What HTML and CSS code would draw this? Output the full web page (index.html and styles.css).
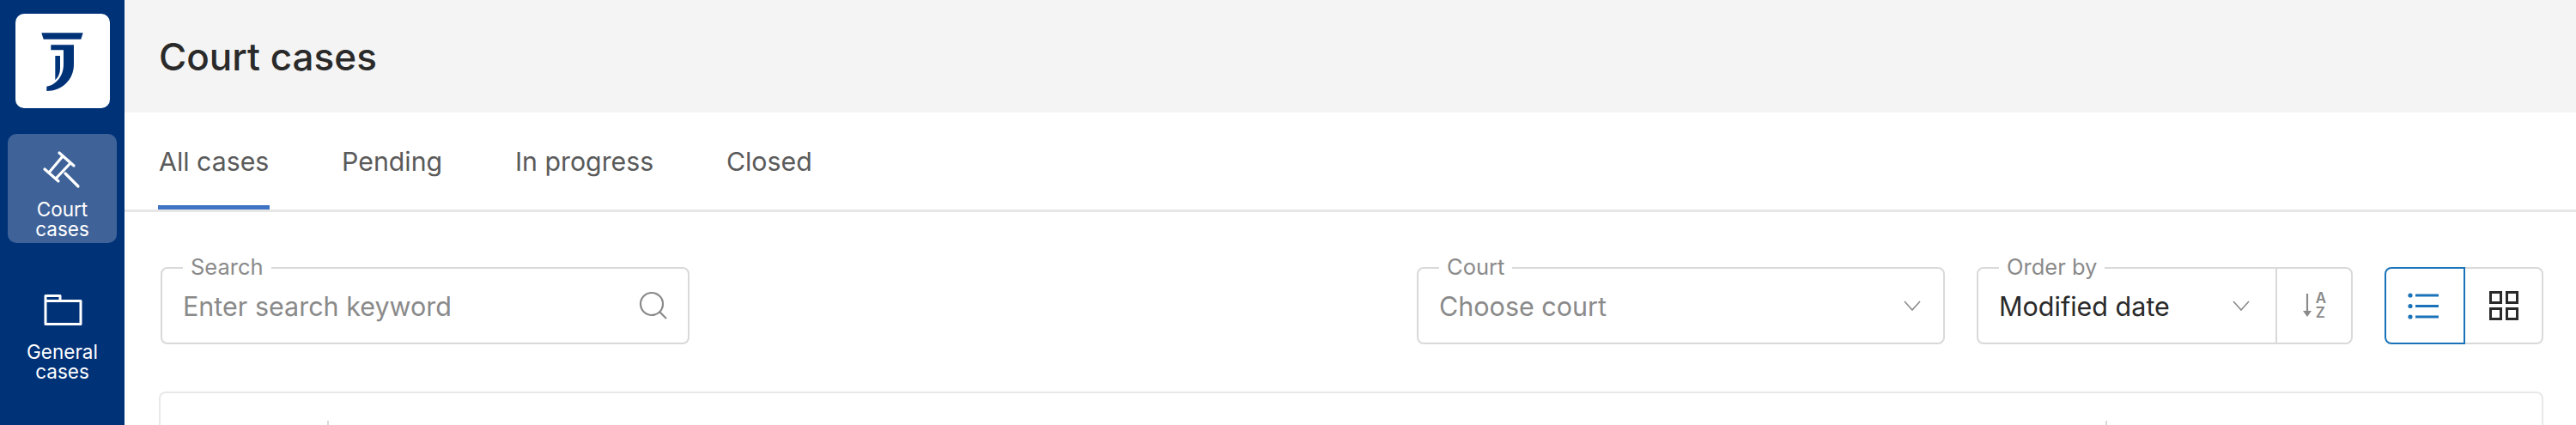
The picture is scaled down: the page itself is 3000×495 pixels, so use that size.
FILE: index.html
```html
<!DOCTYPE html>
<html lang="en">
<head>
<meta charset="utf-8">
<title>Court cases</title>
<link rel="stylesheet" href="styles.css">
</head>
<body>
<div class="app">
  <nav class="sidebar">
    <a class="logo">
      <svg viewBox="0 0 110 110" width="110" height="110"><path fill="#003278" d="M30.3 22.3H78.7L76.3 29.7H32.7Z"/><path fill="#003278" d="M41.3 36.3H68V59C68 77 54 90 36.3 90V84.7C47 83 56 73 56 59V42.3H41.3Z"/><path fill="#003278" d="M46.3 49H52V64C52 69 50 74 46.3 77.3Z"/></svg>
    </a>
    <a class="nav-item active">
      <svg viewBox="0 0 48 48" width="48" height="48" fill="none" stroke="#fff" stroke-width="3.2" stroke-linecap="round"><path d="M20 4L37 19M3 23L19 37M24 8L8 27M33 16L16 34M27 28L42 43"/></svg>
      <span class="nav-label">Court<br>cases</span>
    </a>
    <a class="nav-item">
      <svg viewBox="0 0 48 48" width="48" height="48" fill="none" stroke="#fff" stroke-width="3" stroke-linejoin="round"><path d="M4 4.500H21V10.500H45V37.500H4ZM4 10.500H21"/></svg>
      <span class="nav-label">General<br>cases</span>
    </a>
  </nav>
  <main class="main">
    <header class="page-head"><h1 class="page-title">Court cases</h1></header>
    <div class="tabs">
      <a class="tab selected">All cases</a>
      <a class="tab">Pending</a>
      <a class="tab">In progress</a>
      <a class="tab">Closed</a>
    </div>
    <div class="toolbar">
      <div class="field field-search">
        <span class="legend">Search</span>
        <span class="value placeholder">Enter search keyword</span>
        <svg class="icon" viewBox="0 0 34 34" width="34" height="34" fill="none" stroke="#8a8a8a" stroke-width="2.2"><circle cx="15" cy="15" r="13"/><path d="M24.500 24.500L32 32"/></svg>
      </div>
      <div class="spacer"></div>
      <div class="field field-court">
        <span class="legend">Court</span>
        <span class="value placeholder">Choose court</span>
        <svg class="chevron" viewBox="0 0 20 12" width="20" height="12" fill="none" stroke="#8a8a8a" stroke-width="1.6"><path d="M1 1L10 11L19 1"/></svg>
      </div>
      <div class="field field-order">
        <span class="legend">Order by</span>
        <div class="order-select">
          <span class="value">Modified date</span>
          <svg class="chevron" viewBox="0 0 20 12" width="20" height="12" fill="none" stroke="#8a8a8a" stroke-width="1.6"><path d="M1 1L10 11L19 1"/></svg>
        </div>
        <div class="order-sort">
          <svg viewBox="0 0 12 30" width="12" height="30"><path d="M6 1V24" stroke="#8a8a8a" stroke-width="2.2"/><path d="M1 21H11L6 28Z" fill="#8a8a8a"/></svg>
          <span class="sort-letters"><span>A</span><span>Z</span></span>
        </div>
      </div>
      <div class="view-toggle">
        <button class="view-btn on">
          <svg viewBox="0 0 36 31" width="36" height="31" fill="#1a73b8"><circle cx="3" cy="3" r="2.600"/><circle cx="3" cy="15.500" r="2.600"/><circle cx="3" cy="28" r="2.600"/><rect x="9" y="1.500" width="27" height="3"/><rect x="9" y="14" width="27" height="3"/><rect x="9" y="26.500" width="27" height="3"/></svg>
        </button>
        <button class="view-btn">
          <svg viewBox="0 0 34 34" width="34" height="34" fill="none" stroke="#2a2a2a" stroke-width="3"><rect x="1.500" y="1.500" width="12" height="12"/><rect x="20.500" y="1.500" width="12" height="12"/><rect x="1.500" y="20.500" width="12" height="12"/><rect x="20.500" y="20.500" width="12" height="12"/></svg>
        </button>
      </div>
    </div>
    <div class="card">
      <div class="card-head">
        <span class="col col-a"></span>
        <span class="col col-b"></span>
        <span class="col col-c"></span>
      </div>
    </div>
  </main>
</div>
</body>
</html>
```

FILE: styles.css
```css
* { box-sizing: border-box; }
html, body { margin: 0; height: 100%; overflow: hidden; background: #fff; }
body { font-family: Inter, "Liberation Sans", sans-serif; color: #222; }

.app { display: flex; height: 495px; overflow: hidden; }

.sidebar { width: 145px; flex: none; background: #003278; display: flex; flex-direction: column; align-items: center; padding-top: 16px; }
.logo { width: 110px; height: 110px; flex: none; background: #fff; border-radius: 10px; display: block; margin-bottom: 30px; }
.logo svg { display: block; }
.nav-item { width: 127px; height: 127px; flex: none; border-radius: 10px; display: flex; flex-direction: column; align-items: center; padding-top: 18px; color: #fff; margin-bottom: 39px; }
.nav-item.active { background: #3f6399; }
.nav-label { font-size: 22.500px; line-height: 23px; text-align: center; margin-top: 10px; }

.main { flex: 1; min-width: 0; display: flex; flex-direction: column; }
.page-head { height: 131px; flex: none; background: #f4f4f4; display: flex; align-items: center; padding-left: 40px; }
.page-title { margin: 0; font-size: 44px; font-weight: 500; color: #2a2a2a; }

.tabs { height: 116px; flex: none; border-bottom: 3px solid #e6e6e6; display: flex; gap: 82.700px; padding-left: 39px; }
.tab { height: 113px; padding: 0 1px; display: flex; align-items: center; font-size: 30.300px; color: #5a5a5a; }
.tab.selected { border-bottom: 5px solid #3f73c4; padding-top: 5px; }

.toolbar { display: flex; flex: none; gap: 37px; padding: 64px 38px 0 42px; }
.spacer { flex: 1; }
.field { position: relative; height: 90px; border: 2px solid #d9d9d9; border-radius: 8px; display: flex; align-items: center; }
.field-search { width: 616px; padding: 0 23px 0 24px; justify-content: space-between; }
.field-court { width: 615px; padding: 0 26px 0 24px; justify-content: space-between; }
.field-order { width: 438px; }
.legend { position: absolute; top: -17px; left: 24px; padding: 0 9px; background: #fff; font-size: 25.500px; line-height: 30px; color: #8a8a8a; }
.value { font-size: 30.500px; color: #2a2a2a; }
.placeholder { color: #8a8a8a; }
.icon, .chevron { flex: none; }
.order-select { flex: 1; height: 100%; display: flex; align-items: center; justify-content: space-between; padding: 0 30px 0 24px; border-right: 2px solid #d9d9d9; }
.order-sort { width: 86px; flex: none; display: flex; align-items: center; justify-content: center; gap: 4px; }
.sort-letters { display: flex; flex-direction: column; font-size: 17px; line-height: 17px; font-weight: 600; color: #8a8a8a; }

.view-toggle { display: flex; width: 185px; height: 90px; }
.view-btn { flex: 1; height: 90px; background: #fff; border: 2px solid #d9d9d9; border-left: 0; border-radius: 0 8px 8px 0; padding: 0; display: flex; align-items: center; justify-content: center; }
.view-btn.on { flex: none; width: 94px; padding-right: 4px; border: 2px solid #1a73b8; border-radius: 8px 0 0 8px; }

.card { margin: 55px 38px 0 40px; flex: none; height: 60px; border: 2px solid #e8e8e8; border-bottom: 0; border-radius: 8px 8px 0 0; }
.card-head { display: flex; padding-top: 32px; }
.col { height: 20px; border-right: 2px solid #d9d9d9; }
.col-a { width: 196px; }
.col-b { width: 2071px; }
.col-c { flex: 1; border-right: 0; }
```
